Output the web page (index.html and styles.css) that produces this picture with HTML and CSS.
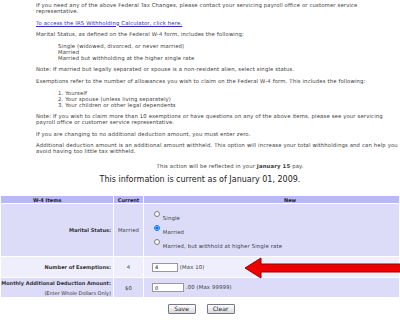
FILE: index.html
```html
<!DOCTYPE html>
<html lang="en">
<head>
  <meta charset="UTF-8" />
  <title>Federal Tax Changes</title>
  <link rel="stylesheet" href="styles.css">
</head>
<body>
  <div class="notes">
    <p>If you need any of the above Federal Tax Changes, please contact your servicing payroll office or customer service representative.</p>
    <p><a href="#">To access the IRS Withholding Calculator, click here.</a></p>
    <p>Marital Status, as defined on the Federal W-4 form, includes the following:</p>
    <div class="list">
      <div>Single (widowed, divorced, or never married)</div>
      <div>Married</div>
      <div>Married but withholding at the higher single rate</div>
    </div>
    <p>Note: If married but legally separated or spouse is a non-resident alien, select single status.</p>
    <p>Exemptions refer to the number of allowances you wish to claim on the Federal W-4 form. This includes the following:</p>
    <div class="list">
      <div>1. Yourself</div>
      <div>2. Your spouse (unless living separately)</div>
      <div>3. Your children or other legal dependents</div>
    </div>
    <p>Note: If you wish to claim more than 10 exemptions or have questions on any of the above items, please see your servicing payroll office or customer service representative.</p>
    <p>If you are changing to no additional deduction amount, you must enter zero.</p>
    <p>Additional deduction amount is an additional amount withheld. This option will increase your total withholdings and can help you avoid having too little tax withheld.</p>
    <p class="action">This action will be reflected in your <b>January 15</b> pay.</p>
  </div>

  <h1 class="current">This information is current as of January 01, 2009.</h1>

  <form class="w4">
    <table class="w4-table">
      <colgroup>
        <col class="c-item">
        <col class="c-current">
        <col class="c-new">
      </colgroup>
      <tr class="head">
        <th class="th-item">W-4 Items</th>
        <th>Current</th>
        <th class="th-new">New</th>
      </tr>
      <tr class="row-marital">
        <td class="label">Marital Status:</td>
        <td class="cur">Married</td>
        <td class="new">
          <label class="opt"><input type="radio" name="ms"> Single</label>
          <label class="opt"><input type="radio" name="ms" checked> Married</label>
          <label class="opt"><input type="radio" name="ms"> Married, but withhold at higher Single rate</label>
        </td>
      </tr>
      <tr class="row-light">
        <td class="label">Number of Exemptions:</td>
        <td class="cur">4</td>
        <td class="new"><input class="field field-ex" type="text" value="4"> (Max 10)</td>
      </tr>
      <tr class="row-amount">
        <td class="label">Monthly Additional Deduction Amount:<br><span class="hint">(Enter Whole Dollars Only)</span></td>
        <td class="cur">$0</td>
        <td class="new"><input class="field field-amt" type="text" value="0"> .00 (Max 99999)</td>
      </tr>
    </table>
    <div class="actions">
      <button type="button">Save</button>
      <button type="button">Clear</button>
    </div>
  </form>

  <!-- red callout arrow pointing at the exemptions box -->
  <svg class="arrow" width="160" height="24" viewBox="0 0 160 24">
    <polygon points="1,12 17,2 17,8 160,8 160,16 17,16 17,22" fill="#ee0000" stroke="#990000" stroke-width="1"/>
  </svg>
</body>
</html>
```

FILE: styles.css
```css
* {
  box-sizing: border-box;
}

body {
  margin: 0;
  width: 400px;
  height: 320px;
  overflow: hidden;
  position: relative;
  background: #fff;
  color: #3a3a3a;
  font-family: "DejaVu Sans", Verdana, sans-serif;
  font-size: 5.3px;
  line-height: 6px;
  letter-spacing: 0.15px;
}

.notes {
  padding: 2px 0 0 36px;
}

.notes p {
  margin: 0 0 5.6px;
}

.notes a {
  color: #2a2ac4;
}

.list {
  padding-left: 22px;
  margin-bottom: 5.6px;
}

.action {
  margin-top: 9px !important;
  text-align: center;
  padding-left: 24px;
}

.current {
  margin: 5px 0 11px;
  text-align: center;
  font-weight: normal;
  font-size: 8px;
  line-height: 10px;
  letter-spacing: 0;
  color: #222;
}

.w4-table {
  width: 400px;
  table-layout: fixed;
  border-collapse: collapse;
}

.c-item { width: 113px; }
.c-current { width: 30px; }

.w4-table th,
.w4-table td {
  padding: 0 2px;
  border: 1px solid #fff;
  border-top: none;
  vertical-align: middle;
}

.head th {
  height: 8px;
  background: #b8b8f4;
  font-size: 5px;
  letter-spacing: 0;
  color: #222;
}

.head .th-item {
  text-align: left;
  padding-left: 32px;
}

.head .th-new {
  text-align: left;
  padding-left: 140px;
}

.row-marital td,
.row-amount td {
  background: #dcdcf9;
}

.row-light td {
  background: #eeeefc;
}

.row-marital td { height: 53px; }
.row-light td { height: 21px; }
.row-amount td { height: 20px; }

.w4-table .label {
  padding: 0 2px 0 0;
  text-align: right;
  font-weight: bold;
  font-size: 5px;
  letter-spacing: 0;
  white-space: nowrap;
  color: #333;
}

.hint {
  font-weight: normal;
  display: inline-block;
  margin-top: 4px;
}

.cur {
  text-align: center;
}

.w4-table .new {
  padding-left: 8px;
}

.row-marital .new {
  padding-top: 4px;
}

.opt {
  display: block;
  height: 14px;
}

.opt input {
  width: 6px;
  height: 6px;
  margin: 0 1px 0 2px;
  vertical-align: 3px;
}

.field {
  height: 9px;
  padding: 0 2px;
  border: 1px solid #999;
  font: inherit;
  font-size: 5px;
  vertical-align: middle;
}

.field-ex { width: 26px; }
.field-amt { width: 32px; }

.actions {
  display: flex;
  justify-content: center;
  gap: 11px;
  padding: 6px 0 0 2px;
}

.actions button {
  height: 10px;
  padding: 0 4px;
  min-width: 28px;
  font-family: inherit;
  font-size: 6px;
  line-height: 8px;
  color: #223;
  border: 1px solid #778;
  border-radius: 1px;
  background: linear-gradient(#fff, #d8d8d8);
}

.arrow {
  position: absolute;
  left: 244px;
  top: 256px;
}
```
